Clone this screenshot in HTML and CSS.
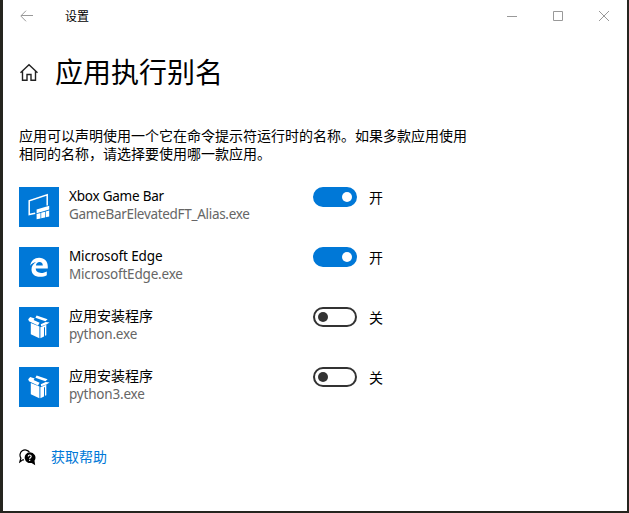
FILE: index.html
```html
<!DOCTYPE html>
<html lang="zh-CN">
<head>
<meta charset="utf-8">
<title>设置</title>
<link rel="stylesheet" href="styles.css">
</head>
<body>
<svg class="sprites" width="0" height="0">
  <symbol id="box" viewBox="0 0 40 40">
    <path fill="#fff" d="M11.8 16 20.4 19.6V31.2L11.8 27.2ZM21.4 20.2 27.3 17.8V28.2L26 28.8V20L25 20.4V29.4L21.4 31.2ZM9.2 12.2 11.2 10 15.6 11.6 14.6 13 20.6 15.8 19 18.4 10 14.2ZM17.6 8.6 28.6 12.2 26.4 14.2 16.4 10.8ZM21.8 17.2 26.8 15 30.6 15.4 27.3 17.4 22.2 19.2Z"/>
  </symbol>
</svg>
<div class="window">
  <header class="titlebar">
    <svg class="back" width="14" height="12" viewBox="0 0 14 12"><path d="M6 .7.8 6 6 11.3M1 5.5H13"/></svg>
    <span class="caption">设置</span>
    <div class="controls">
      <svg width="12" height="12" viewBox="0 0 12 12"><path d="M1 6.5H11"/></svg>
      <svg width="12" height="12" viewBox="0 0 12 12"><path d="M1.5 1.5H10.5V10.5H1.5Z"/></svg>
      <svg width="12" height="12" viewBox="0 0 12 12"><path d="M1 1 11 11M11 1 1 11"/></svg>
    </div>
  </header>
  <main>
    <div class="heading">
      <svg class="home" width="20" height="20" viewBox="0 0 20 20"><path d="M1.5 10.8 10 2.8 18.5 10.8M3.5 9.2V18.3H8V12.5H12V18.3H16.5V9.2"/></svg>
      <h1>应用执行别名</h1>
    </div>
    <p class="intro">应用可以声明使用一个它在命令提示符运行时的名称。如果多款应用使用相同的名称，请选择要使用哪一款应用。</p>
    <ul class="apps">
      <li>
        <svg class="tile" viewBox="0 0 40 40"><path fill="none" stroke="#fff" stroke-width="1.5" d="M16.2 26.2 10.2 27.6V13.8L28.2 7.8V18.6"/><path fill="#fff" d="M17.6 22.4 30.2 18.8V22.6L17.6 26.2ZM17.6 27 21.5 26V31.4L17.6 32.2ZM22.2 25.8 26 24.8V30.4L22.2 31.2ZM26.7 24.6 30.2 23.6V29.4L26.7 30.2Z"/></svg>
        <div class="text"><span class="name xbox">Xbox Game Bar</span><span class="exe gamebar">GameBarElevatedFT_Alias.exe</span></div>
        <span class="toggle on"></span><span class="state">开</span>
      </li>
      <li>
        <svg class="tile" viewBox="0 0 40 40"><path fill="#fff" d="M11.2 18.8C12 13.5 15.5 10.7 20.1 10.7 25.6 10.7 28.8 14.4 28.8 19.5V21.6H16.7C16.8 24.5 19.2 25.9 22.1 25.9 24.4 25.9 26.3 25.2 27.8 24.4V28.3C26 29.3 23.8 29.8 21.1 29.8 15.6 29.8 12.5 26.7 12.5 22.4 12.5 19.2 14.2 16.8 17 15.3 14.5 15.5 12.6 16.7 11.2 18.8ZM16.9 18.5H23.8C23.8 16.2 22.7 15 20.5 15 18.6 15 17.2 16.4 16.9 18.5Z"/></svg>
        <div class="text"><span class="name edge">Microsoft Edge</span><span class="exe msedge">MicrosoftEdge.exe</span></div>
        <span class="toggle on"></span><span class="state">开</span>
      </li>
      <li>
        <svg class="tile"><use href="#box"/></svg>
        <div class="text"><span class="name">应用安装程序</span><span class="exe py">python.exe</span></div>
        <span class="toggle"></span><span class="state">关</span>
      </li>
      <li>
        <svg class="tile"><use href="#box"/></svg>
        <div class="text"><span class="name">应用安装程序</span><span class="exe py">python3.exe</span></div>
        <span class="toggle"></span><span class="state">关</span>
      </li>
    </ul>
    <div class="help">
      <svg width="17" height="17" viewBox="0 0 17 17"><path fill="none" stroke="#000" stroke-width="1.2" d="M5 10.8H3.8L.9 12.8 1.9 9A5 5 0 1 1 10.4 3.2"/><path d="M10.8 3.3A5.5 5.4 0 0 1 15.5 11.7L16.2 16.2 12.6 13.9A5.5 5.4 0 1 1 10.8 3.3Z"/><path fill="none" stroke="#fff" stroke-width="1.1" d="M9.2 7.4C9.2 5.5 12.2 5.5 12.2 7.4 12.2 8.6 10.7 8.5 10.7 10M10.7 10.8V12"/></svg>
      <a>获取帮助</a>
    </div>
  </main>
</div>
</body>
</html>
```
FILE: styles.css
```css
* { box-sizing: border-box; }
body {
  margin: 0;
  height: 513px;
  overflow: hidden;
  background: #25251f;
  padding: 0 2px 2px 3px;
  font: 14px/18px "Noto Sans", "Noto Sans CJK SC", sans-serif;
  color: #000;
}
.sprites { display: block; }
.window { height: 511px; background: #fff; }
.titlebar { display: flex; align-items: center; height: 32px; padding: 0 17px; }
.titlebar svg { fill: none; stroke: #999; stroke-width: 1; }
.back { margin-right: 31px; }
.caption { font: 12px/16px "Noto Sans CJK SC", sans-serif; }
.controls { display: flex; gap: 34px; margin-left: auto; }
main { padding: 0 16px; }
.heading { display: flex; align-items: center; height: 80px; }
.home { fill: none; stroke: #222; stroke-width: 1.4; margin-right: 16px; }
h1 { margin: 0 0 2px; font: 28px/40px "Noto Sans CJK SC", sans-serif; }
.intro { margin: 14px 0 25px; width: 450px; font-family: "Noto Sans CJK SC", sans-serif; }
.apps { list-style: none; margin: 0; padding: 0; display: grid; gap: 20px; }
.apps li { display: flex; height: 40px; }
.tile { width: 40px; height: 40px; background: #0078d7; margin-right: 10px; }
.text { width: 244px; display: flex; flex-direction: column; }
.name, .exe { height: 18px; line-height: 18px; white-space: nowrap; }
.exe { color: #666; }
.xbox, .edge, .exe { font-size: 13.5px; }
.xbox { letter-spacing: -.22px; }
.gamebar { letter-spacing: -.3px; }
.edge { letter-spacing: -.12px; }
.msedge { letter-spacing: -.19px; }
.py { letter-spacing: -.2px; }
.toggle {
  width: 44px;
  height: 20px;
  padding: 3px;
  border: 2px solid #333;
  border-radius: 10px;
}
.toggle::before {
  content: "";
  display: block;
  width: 10px;
  height: 10px;
  border-radius: 50%;
  background: #333;
}
.toggle.on { background: #0078d7; border-color: #0078d7; }
.toggle.on::before { background: #fff; margin-left: auto; }
.state { margin: 2px 0 0 12px; }
.help { display: flex; align-items: center; height: 20px; margin-top: 40px; }
.help a { margin-left: 15px; color: #0078d7; }
```
